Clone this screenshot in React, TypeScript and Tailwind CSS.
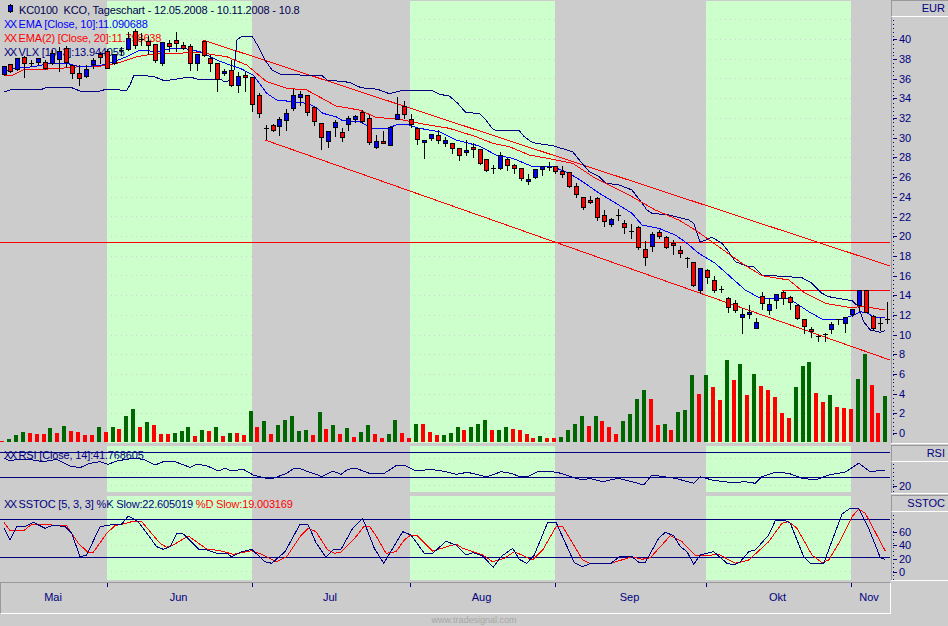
import React from "react";

type C = [number, number, number, number, "b" | "r" | "d"];
const candles: C[] = [
  [66,74,66,75,"b"],[64,71,64,72,"r"],[58,69,58,70,"b"],[57,63,56,77,"r"],[63,63,60,66,"d"],[58,62,58,64,"b"],[62,68,60,69,"r"],[53,63,50,64,"b"],[51,59,47,71,"b"],[48,62,46,67,"r"],
  [65,73,65,78,"r"],[73,78,65,85,"r"],[69,76,65,77,"b"],[60,64,58,68,"b"],[54,57,52,63,"r"],[51,68,49,68,"r"],[54,63,54,64,"b"],[50,50,47,55,"d"],[38,49,32,50,"b"],[31,45,29,48,"r"],
  [39,39,33,45,"d"],[41,45,36,54,"r"],[44,60,44,62,"r"],[42,63,42,65,"b"],[43,46,40,51,"r"],[40,43,32,51,"r"],[45,48,42,49,"r"],[46,63,44,70,"r"],[54,63,54,70,"b"],[41,55,41,56,"r"],
  [58,63,55,71,"r"],[63,79,63,91,"r"],[71,73,69,75,"b"],[70,85,60,86,"r"],[76,85,72,92,"b"],[75,77,72,91,"r"],[77,104,77,111,"r"],[95,113,93,117,"r"],[128,128,125,139,"d"],[125,130,124,131,"r"],
  [119,126,117,135,"b"],[113,120,109,130,"b"],[95,108,89,110,"b"],[94,97,91,105,"b"],[95,112,95,115,"r"],[107,121,107,125,"r"],[123,137,123,149,"r"],[131,141,131,147,"b"],[122,127,120,136,"b"],[132,137,128,141,"r"],
  [118,124,116,130,"b"],[116,119,115,122,"b"],[112,121,110,123,"r"],[118,142,115,144,"r"],[141,147,135,148,"b"],[141,143,131,143,"r"],[127,145,126,145,"b"],[114,119,97,119,"b"],[106,114,101,118,"r"],[119,124,114,127,"r"],
  [128,139,128,144,"r"],[140,142,140,158,"b"],[134,138,134,140,"b"],[135,140,130,143,"r"],[140,143,137,146,"b"],[143,148,143,153,"r"],[148,155,148,160,"r"],[150,152,140,155,"b"],[147,149,143,157,"r"],[149,163,149,164,"r"],
  [159,170,159,171,"r"],[168,168,165,173,"d"],[155,168,152,169,"b"],[159,165,158,170,"r"],[165,168,164,173,"r"],[168,178,168,180,"r"],[179,181,174,184,"b"],[169,177,169,178,"b"],[166,169,166,175,"b"],[167,167,162,170,"d"],
  [166,171,166,173,"r"],[171,174,166,177,"r"],[172,186,172,187,"r"],[186,194,183,197,"r"],[197,207,197,209,"r"],[200,202,196,203,"r"],[198,217,197,220,"r"],[215,221,210,226,"r"],[219,224,218,226,"b"],[215,215,209,220,"d"],
  [223,227,220,233,"r"],[231,231,224,238,"d"],[227,247,226,249,"r"],[249,257,241,265,"r"],[234,246,232,251,"b"],[232,236,230,238,"r"],[237,247,236,248,"r"],[243,245,240,254,"r"],[250,253,246,257,"r"],[258,258,257,267,"d"],
  [262,285,262,286,"r"],[268,290,268,293,"b"],[270,277,269,283,"r"],[280,290,276,292,"r"],[289,289,286,292,"d"],[298,307,297,312,"r"],[303,310,300,312,"r"],[314,317,308,333,"b"],[312,314,305,318,"b"],[322,328,318,328,"b"],
  [296,303,292,309,"r"],[304,310,298,314,"b"],[294,300,294,308,"b"],[292,298,291,304,"r"],[297,302,296,309,"r"],[305,318,305,319,"r"],[319,326,319,333,"r"],[329,331,327,337,"r"],[336,336,335,341,"d"],[334,334,333,341,"d"],
  [324,329,322,333,"b"],[319,319,319,324,"d"],[317,323,317,332,"b"],[309,314,309,316,"b"],[290,305,290,311,"b"],[290,312,290,312,"r"],[316,328,315,330,"r"],[323,323,317,330,"d"],[319,319,302,323,"d"],
];

const volA = [214,207,195,186,189,192,192,174,189,168,183,186,195,195,171,186,171,177,138,117,171,156,165,192,192,189,183,171,198,180,183,171,198,189,189,195,123,171,153,192,165,150,138,183,180,195,126,177,165,192,174,201,186,165,192,204,192,150,189,204,162,162,186,195,195,189,171,180,171,162,150,180,180,171,177,180,192,204,198,204,204,201,180,162,138,168,138,153,171,192,153,132];
const volB = [567,540,567,645,642,660,606,600,495,552,495,531,570,450,510,462,555,492,528,540,561,609,624,531,468,456,549,576,555,591,594,597,507,432,525,609,558];
const greenA = new Set([1,2,3,7,9,14,16,18,19,21,25,26,27,29,31,33,36,38,40,41,42,43,44,46,48,50,52,53,56,57,60,64,65,66,68,69,70,72,73,78,81,82,83,84,86,90,91]);
const greenB = new Set([0,1,4,6,7,8,10,13,15,17,23,24,25,28,32,33,36]);
const volumes = [
  ...volA.map((y, i) => ({ top: 370 + y / 3, green: greenA.has(i) })),
  ...volB.map((y, i) => ({ top: 210 + y / 3, green: greenB.has(i) })),
];

const z = (x0: number, y0: number, a: number[]) => {
  const o: string[] = [];
  for (let i = 0; i < a.length; i += 2) o.push(`${(x0 + a[i] / 3).toFixed(1)},${(y0 + a[i + 1] / 3).toFixed(1)}`);
  return o.join(" ");
};

const vlx = [
  z(0,0,[12,276,30,270,51,267,90,267,120,270,135,264,165,261,210,261,240,273,300,273,321,267,360,270,381,270,390,255,402,225,420,225,465,231,495,243,510,240,570,231,591,237,660,237,675,246,693,240,702,210,711,120,726,108,756,108,774,138,795,180,816,210,840,222,900,225,939,228]),
  z(316,0,[18,227,34,240,100,247,135,263,185,268,220,281,260,271,350,273,370,283,400,288,425,310,450,338,490,340,510,360,530,387,545,393,610,392,625,410,650,428,710,437,770,455,790,480,820,515,850,530,870,550,910,555,948,570]),
  z(632,0,[30,610,45,630]),
  z(632,210,[60,10,110,15,170,30,185,40,205,97,240,82,270,100,290,125,310,155,345,168,365,170,390,195,510,203,540,220,570,250,590,260,660,272,680,290,695,335,715,360,745,367,760,362]),
].join(" ");
const ema10 = [
  z(0,0,[12,212,50,205,100,200,150,190,200,190,240,200,290,197,320,193,380,170,420,150,470,155,520,145,560,147,600,155,650,180,690,195,720,205,760,225,800,280,830,300,880,305,920,310]),
  z(316,0,[0,322,20,340,60,350,80,362,130,365,170,385,215,385,245,373,280,375,310,385,370,395,420,420,490,438,540,465,590,475,645,498,710,500,760,520,800,545,850,580,900,610,948,640]),
  z(632,210,[30,45,80,55,130,75,165,100,200,130,250,160,300,205,340,240,385,265,470,265,530,305,575,330,630,328,665,315,685,305,705,308,725,322,760,322]),
].join(" ");
const ema20 = [
  z(0,0,[12,228,40,225,70,210,130,208,180,205,240,200,290,200,350,190,410,170,440,165,500,160,600,158,680,170,740,195,800,245,860,265,920,270]),
  z(316,0,[0,285,60,318,130,330,180,352,250,358,320,372,400,385,480,410,530,430,580,440,640,465,710,478,770,490,830,530,948,590]),
  z(632,210,[70,0,140,30,190,60,260,110,330,160,390,197,470,210,520,250,580,280,650,292,700,290,760,300]),
].join(" ");
const rsi = [
  z(0,370,[12,265,30,272,60,267,100,270,130,275,170,268,210,288,240,293,270,280,300,275,325,283,350,273,380,268,400,265,430,268,465,285,490,275,525,275,570,292,590,283,620,287,655,303,675,295,695,303,730,298,760,315,800,325,820,325,860,310,880,296,900,296,925,305]),
  z(316,370,[0,313,18,320,50,303,75,313,95,298,120,295,160,310,205,310,240,287,265,286,300,303,345,298,390,305,420,313,455,307,500,318,520,318,555,305,590,311,610,320,635,320,665,305,700,303,735,310,770,322,800,330,820,325,860,335,905,325]),
  z(632,440,[0,125,35,135,60,105,95,110,130,115,185,130,205,110,240,120,300,128,340,125,370,130,390,110,430,97,470,100,510,115,550,120,590,105,640,96,680,70,715,95,760,90]),
].join(" ");
const stK = [
  z(0,370,[12,475,30,510,50,470,75,470,100,457,135,475,160,465,195,470,215,490,240,560,260,555,300,470,330,465,365,462,385,438,415,455,470,530,490,538,510,530,530,490,550,492,595,537,620,540,650,550,680,550,695,560,720,547,755,538,795,575,815,580,855,545,900,463,925,465]),
  z(316,370,[0,518,30,562,50,540,75,538,110,475,140,445,175,535,203,580,260,485,285,495,325,550,350,550,390,514,420,525,450,555,470,548,500,558,532,592,555,560,590,535,610,568,632,580,655,555,695,457,720,457,775,578,800,590,825,580,885,580,910,560]),
  z(632,440,[0,350,20,367,40,367,80,295,100,277,125,287,145,320,165,335,185,373,205,345,245,335,285,370,305,375,325,365,350,335,370,330,410,285,430,242,455,240,475,250,515,350,535,370,575,370,630,222,655,205,680,205,710,265,745,353,760,358]),
].join(" ");
const stD = [
  z(0,370,[12,457,30,482,70,483,95,463,145,463,165,467,200,467,235,520,265,548,280,547,320,490,345,467,370,462,395,455,425,455,480,520,500,532,520,525,565,498,620,537,660,542,700,553,755,542,790,555,830,575,860,560,900,500,925,475]),
  z(316,370,[0,485,35,540,55,550,75,547,120,500,145,468,160,468,180,497,210,550,240,545,265,510,285,495,305,498,350,543,420,522,440,535,500,555,530,575,565,565,595,545,650,570,680,540,720,470,740,470,800,570,825,582,885,580]),
  z(632,440,[0,350,30,358,55,353,115,287,150,305,190,345,240,345,260,343,310,370,350,360,410,305,450,250,470,245,495,265,540,345,570,368,590,360,620,310,660,230,680,207,700,220,760,333]),
].join(" ");

const bandSpans: [number, number][] = [[107, 252], [410, 555], [706, 851]];

const Dots = ({ ys }: { ys: number[] }) => (
  <g stroke="#cfcfcf" strokeDasharray="1 4" strokeWidth="1">
    {ys.map((y) =>
      bandSpans.map(([a, b]) => <line key={`${a}-${y}`} x1={a + 4} x2={b} y1={Math.round(y) + 0.5} y2={Math.round(y) + 0.5} />)
    )}
  </g>
);

const Bands = () => (
  <div className="flex h-full">
    <div className="w-[107px]" />
    <div className="w-[145px] bg-[#ccffcc]" />
    <div className="w-[158px]" />
    <div className="w-[145px] bg-[#ccffcc]" />
    <div className="w-[151px]" />
    <div className="w-[145px] bg-[#ccffcc]" />
  </div>
);

const Line = ({ pts, color }: { pts: string; color: string }) => (
  <polyline points={pts} fill="none" stroke={color} strokeWidth="1" />
);

const Hl = ({ y, color, x1 = 0, x2 = 890 }: { y: number; color: string; x1?: number; x2?: number }) => (
  <rect x={x1} y={y} width={x2 - x1} height="1" fill={color} />
);

const NAVY = "#000080";

function Candles() {
  return (
    <g>
      {candles.map(([t, b, hi, lo, k], i) => {
        const x = i === 0 ? 4 : Math.floor(3.9 + 6.9 * i);
        return (
          <g key={i}>
            <rect x={x} y={hi} width="1" height={lo - hi + 1} fill="#000" />
            {k === "d" ? (
              <rect x={x - 2} y={t} width="5" height="1" fill="#000" />
            ) : (
              <>
                <rect x={x - 2} y={t} width="5" height={b - t + 1} fill="#000" />
                {b - t > 1 && (
                  <rect x={x - 1} y={t + 1} width="3" height={b - t - 1} fill={k === "b" ? "#0000ff" : "#ff0000"} />
                )}
              </>
            )}
          </g>
        );
      })}
    </g>
  );
}

function Axis({ h, rowH, pad, labels, dots }: { h: string; rowH: string; pad: string; labels: string[]; dots: number[] }) {
  return (
    <div className={`relative border-l border-[#999999] ${h} ${pad}`}>
      <svg className="absolute left-0 top-0 h-full w-[6px]" shapeRendering="crispEdges">
        {dots.map((y) => (
          <rect key={y} x="1" y={Math.round(y)} width="1" height="1" fill={NAVY} />
        ))}
      </svg>
      {labels.map((l) => (
        <div key={l} className={`flex items-center ${rowH}`}>
          <span className="ml-[1px] h-px w-[4px] bg-[#000080]" />
          <span className="ml-[2px] text-[11px] leading-none text-[#000080]">{l}</span>
        </div>
      ))}
    </div>
  );
}

const AxisHead = ({ t }: { t: string }) => (
  <div className="flex h-[17px] items-center justify-end border-b border-l border-t border-b-white border-l-[#999999] border-t-[#999999] pr-[3px] text-[11px] leading-none text-[#000080]">
    {t}
  </div>
);

const Seg = ({ w, t, tick = true }: { w: string; t: string; tick?: boolean }) => (
  <div className={`relative flex items-center justify-center pr-[2px] pb-[1px] text-[11px] leading-none text-[#000080] ${w}`}>
    {tick && <span className="absolute left-0 top-0 h-[4px] w-px bg-[#000080]" />}
    {t}
  </div>
);

const range = (a: number, b: number, s: number) => {
  const o: number[] = [];
  for (let v = a; v <= b; v += s) o.push(v);
  return o;
};

export default function App() {
  return (
    <div className="flex h-[626px] w-[948px] flex-col overflow-hidden bg-[#cccccc] font-['Liberation_Sans'] text-[11px]">
      <div className="flex">
        <div className="flex w-[891px] flex-col">
          {/* Price pane */}
          <div className="relative mt-px h-[442px] w-[890px]">
            <Bands />
            <div className="absolute left-[19px] top-[2px] whitespace-nowrap text-[11px] leading-[14px] tracking-[-0.16px] text-[#000050]">
              KC0100&nbsp; KCO, Tageschart - 12.05.2008 - 10.11.2008 - 10.8
            </div>
            <div className="absolute left-[4px] top-[16px] whitespace-nowrap text-[11px] leading-[14px] tracking-[-0.16px] text-[#0000ff]">
              <span className="tracking-[-1.5px]">XX</span> EMA [Close, 10]:11.090688
            </div>
            <div className="absolute left-[4px] top-[30px] whitespace-nowrap text-[11px] leading-[14px] tracking-[-0.16px] text-[#ff0000]">
              <span className="tracking-[-1.5px]">XX</span> EMA(2) [Close, 20]:11.798638
            </div>
            <div className="absolute left-[4px] top-[44px] whitespace-nowrap text-[11px] leading-[14px] tracking-[-0.16px] text-[#000080]">
              <span className="tracking-[-1.5px]">XX</span> VLX [10, 3]:13.944055
            </div>
            <svg className="absolute left-0 top-0" width="890" height="442" viewBox="0 1 890 442" shapeRendering="crispEdges">
              <rect x="10" y="4" width="1" height="9" fill="#000" />
              <rect x="8" y="5" width="5" height="7" fill="#000" />
              <rect x="9" y="6" width="3" height="5" fill="#0000ff" />
              <Dots ys={range(0, 21, 1).map((k) => 19.3 + 19.7 * k)} />
              <Hl y={242} color="#ff0000" />
              <Hl y={290} color="#ff0000" x1={782} />
              <line x1="203" y1="40" x2="890" y2="266" stroke="#ff0000" />
              <line x1="265" y1="140" x2="890" y2="360" stroke="#ff0000" />
              <Line pts={vlx} color={NAVY} />
              <Line pts={ema20} color="#ff0000" />
              <Line pts={ema10} color="#0000ff" />
              {volumes.map((v, i) => (
                <rect
                  key={i}
                  x={Math.round(2.1 + 6.9 * i) - 2}
                  y={v.top}
                  width="4"
                  height={442 - v.top}
                  fill={v.green ? "#006600" : "#ff0000"}
                />
              ))}
              <Candles />
            </svg>
          </div>

          {/* RSI pane */}
          <div className="relative mt-[3px] h-[46px] w-[890px]">
            <Bands />
            <div className="absolute left-[4px] top-[2px] whitespace-nowrap text-[11px] leading-[14px] tracking-[-0.16px] text-[#000080]">
              <span className="tracking-[-1.5px]">XX</span> RSI [Close, 14]:41.768605
            </div>
            <svg className="absolute left-0 top-0" width="890" height="46" viewBox="0 446 890 46" shapeRendering="crispEdges">
              <Dots ys={[458, 472, 485]} />
              <Hl y={452} color={NAVY} />
              <Hl y={477} color={NAVY} />
              <Line pts={rsi} color={NAVY} />
            </svg>
          </div>

          {/* Stochastic pane */}
          <div className="relative mt-[4px] h-[84px] w-[890px]">
            <Bands />
            <div className="absolute left-[4px] top-[1px] whitespace-nowrap text-[11px] leading-[14px] tracking-[-0.16px] text-[#000080]">
              <span className="tracking-[-1.5px]">XX</span> SSTOC [5, 3, 3] %K Slow:22.605019{" "}
              <span className="text-[#ff0000]">%D Slow:19.003169</span>
            </div>
            <svg className="absolute left-0 top-0" width="890" height="84" viewBox="0 496 890 84" shapeRendering="crispEdges">
              <Dots ys={[506, 532, 545, 571]} />
              <Hl y={519} color={NAVY} />
              <Hl y={557} color={NAVY} />
              <Line pts={stD} color="#ff0000" />
              <Line pts={stK} color={NAVY} />
            </svg>
          </div>

          {/* Time axis */}
          <div className="mt-[2px] flex h-[32px] border-b border-l border-r border-t border-b-white border-l-[#999999] border-r-white border-t-[#999999]">
            <Seg w="w-[106px]" t="Mai" tick={false} />
            <Seg w="w-[145px]" t="Jun" />
            <Seg w="w-[158px]" t="Jul" />
            <Seg w="w-[145px]" t="Aug" />
            <Seg w="w-[151px]" t="Sep" />
            <Seg w="w-[145px]" t="Okt" />
            <Seg w="w-[38px]" t="Nov" />
          </div>
        </div>

        {/* Value axes */}
        <div className="flex w-[57px] flex-col">
          <AxisHead t="EUR" />
          <Axis
            h="h-[426px]"
            rowH="h-[19.7px]"
            pad="pt-[13px]"
            labels={range(0, 20, 1).map((k) => String(40 - k * 2))}
            dots={range(0, 105, 1).map((k) => 3 + 3.94 * k)}
          />
          <div className="mb-px h-px bg-white" />
          <AxisHead t="RSI" />
          <Axis h="h-[31px]" rowH="h-[14px]" pad="pt-[17px]" labels={["20"]} dots={range(0, 7, 1).map((k) => 2 + 3.9 * k)} />
          <div className="mb-px h-px bg-white" />
          <AxisHead t="SSTOC" />
          <Axis
            h="h-[68px]"
            rowH="h-[13.3px]"
            pad="pt-[14px]"
            labels={["60", "40", "20", "0"]}
            dots={range(0, 16, 1).map((k) => 3 + 4 * k)}
          />
          <div className="h-px bg-white" />
        </div>
      </div>

      <div className="flex h-[12px] items-center justify-center text-[9px] leading-none text-[#a6a6a6]">
        www.tradesignal.com
      </div>
    </div>
  );
}
